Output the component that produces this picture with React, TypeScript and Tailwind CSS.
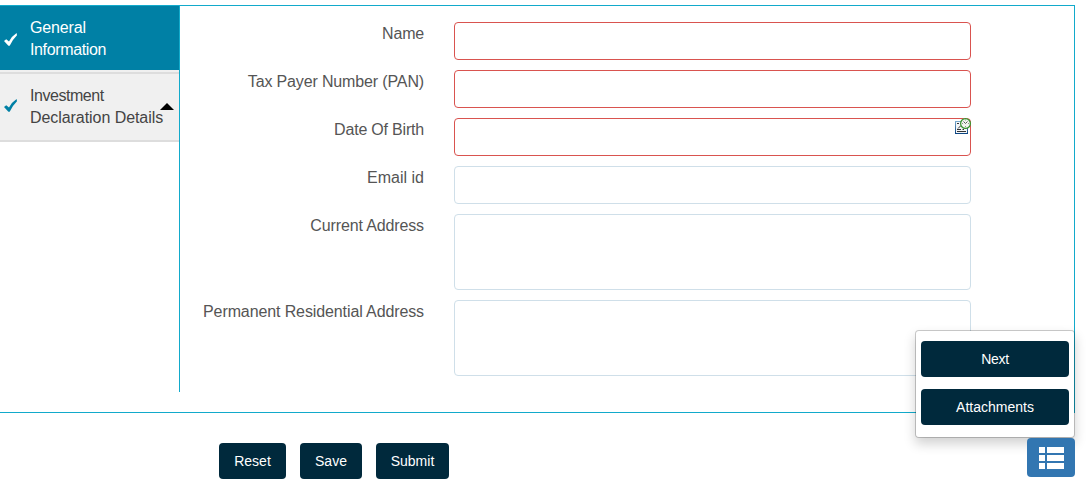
type Field = { label: string; tracking: string; required?: boolean; multiline?: boolean; date?: boolean };

const fields: Field[] = [
  { label: "Name", tracking: "tracking-[-0.2px]", required: true },
  { label: "Tax Payer Number (PAN)", tracking: "tracking-[-0.14px]", required: true },
  { label: "Date Of Birth", tracking: "tracking-[-0.2px]", required: true, date: true },
  { label: "Email id", tracking: "tracking-normal" },
  { label: "Current Address", tracking: "tracking-[-0.13px]", multiline: true },
  { label: "Permanent Residential Address", tracking: "tracking-[-0.11px]", multiline: true },
];

function Check({ className = "" }: { className?: string }) {
  return (
    <svg className={`mr-3 ml-1 h-[13px] w-[14px] shrink-0 ${className}`} viewBox="0 0 14 13" fill="currentColor">
      <path d="M0 8L2.2 6.3L5 8.6Q7.6 3.2 12.6 0L13 2.2Q8.4 6.7 5.7 12.7H4.4Z" />
    </svg>
  );
}

function DateIcon() {
  return (
    <svg className="absolute top-0 right-0 h-4 w-4" viewBox="0 0 16 16">
      <defs>
        <linearGradient id="frame" x2="0" y2="1">
          <stop stopColor="#79a9cc" />
          <stop offset="1" stopColor="#0c4583" />
        </linearGradient>
      </defs>
      <rect x=".5" y="3.5" width="12" height="12" fill="#f2f5f7" stroke="url(#frame)" />
      <path d="M2 5.5H4M3 10.5L6 7.5M2 11.5H6M7.5 11.5H9M2 13.5H11" stroke="#333" fill="none" />
      <circle cx="10.5" cy="5.5" r="4.9" fill="#f1f4ef" stroke="#35932c" strokeWidth="1.2" />
      <path d="M8.5 3.5L10.5 5.5L12.5 3.5" stroke="#526052" fill="none" />
      <path d="M10 2H11M7 5.5H8M13 5.5H14M10 8.5H11" stroke="#8d998b" fill="none" />
    </svg>
  );
}

function Action({ children, className = "" }: { children: string; className?: string }) {
  return (
    <button className={`h-9 shrink-0 rounded-[4px] bg-[#00293c] text-[14px] leading-5 text-white ${className}`}>
      {children}
    </button>
  );
}

export default function App() {
  return (
    <main className="relative h-[484px] w-[1089px] overflow-hidden bg-white pt-[5px] font-['Liberation_Sans',Arial,sans-serif] text-base text-[#555]">
      <section className="flex h-[408px] w-[1075px] border-y border-r border-[#12aacb]">
        <nav className="h-[386px] w-[180px] shrink-0 border-r border-[#12aacb] leading-[22px]">
          <div className="flex h-16 items-center bg-[#0080a5] pt-0.5 text-white">
            <Check />
            <div>
              <div className="tracking-[-0.15px]">General</div>
              <div className="tracking-[-0.36px]">Information</div>
            </div>
          </div>
          <div className="h-1 border-b-2 border-[#ddd] bg-[#f0f0f0]" />
          <div className="relative flex h-[68px] items-center border-b-2 border-[#ddd] bg-[#f0f0f0] text-[#444]">
            <Check className="mb-1 text-[#0080a5]" />
            <div className="whitespace-nowrap">
              <div className="tracking-[-0.45px]">Investment</div>
              <div className="tracking-[-0.06px]">Declaration Details</div>
            </div>
            <svg className="absolute top-[29px] left-[160px] h-[7px] w-[14px]" viewBox="0 0 14 7">
              <path d="M0 7L7 0L14 7Z" fill="#000" />
            </svg>
          </div>
        </nav>
        <form className="flex flex-col gap-2.5 pt-4">
          {fields.map((f) => (
            <label key={f.label} className="flex">
              <span className={`mr-[30px] w-[244px] pt-px text-right leading-[22px] ${f.tracking}`}>{f.label}</span>
              <span className="relative block w-[517px]">
                {f.multiline ? (
                  <textarea className="block h-[76px] w-full resize-none rounded-[4px] border border-[#cfdfe9] bg-white px-3 py-1.5 outline-none" />
                ) : (
                  <input
                    className={`block h-[38px] w-full rounded-[4px] border bg-white px-3 outline-none ${f.required ? "border-[#d9534f]" : "border-[#cfdfe9]"}`}
                  />
                )}
                {f.date && <DateIcon />}
              </span>
            </label>
          ))}
        </form>
      </section>
      <div className="mt-[30px] ml-[219px] flex gap-3.5">
        <Action className="w-[67px]">Reset</Action>
        <Action className="w-[62px]">Save</Action>
        <Action className="w-[73px]">Submit</Action>
      </div>
      <div className="absolute top-[330px] left-[915px] flex h-[108px] w-[160px] flex-col gap-3 rounded-[4px] border border-black/20 bg-white bg-clip-padding px-[5px] pt-2.5 shadow-[0_6px_12px_rgba(0,0,0,0.18)]">
        <Action className="tracking-[-0.3px]">Next</Action>
        <Action>Attachments</Action>
      </div>
      <button aria-label="Actions" className="absolute top-[438px] left-[1027px] flex h-[39px] w-12 items-center justify-center rounded-[4px] bg-[#3276b1]">
        <svg className="h-[22px] w-[25px]" viewBox="0 0 25 22" fill="#fff">
          <path d="M0 0H6V6H0ZM8 0H25V6H8ZM0 8H6V14H0ZM8 8H25V14H8ZM0 16H6V22H0ZM8 16H25V22H8Z" />
        </svg>
      </button>
    </main>
  );
}
